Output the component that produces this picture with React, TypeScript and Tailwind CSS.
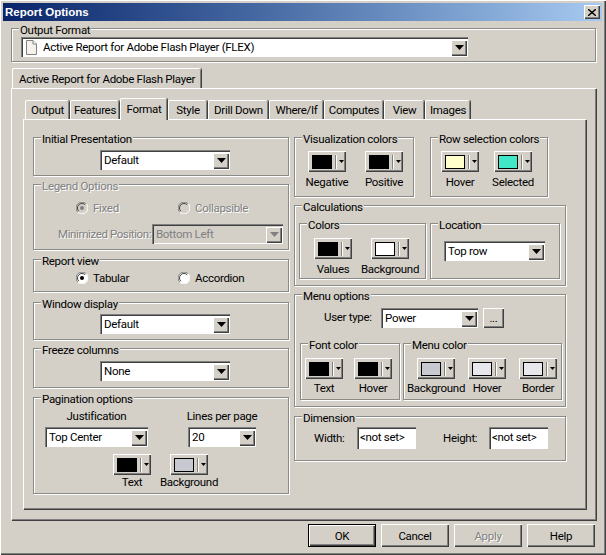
import type { ReactNode } from "react";
import clsx from "clsx";

const raised = "shadow-[inset_1px_1px_0_#fff,inset_-1px_-1px_0_#404040,inset_-2px_-2px_0_#808080]";
const sunken = "shadow-[inset_1px_1px_0_#808080,inset_2px_2px_0_#404040,inset_-1px_-1px_0_#fff]";

function Group({ title, className, disabled, children }: { title: string; className?: string; disabled?: boolean; children?: ReactNode }) {
  return (
    <div className={clsx("relative border border-[#8a8a86] shadow-[inset_1px_1px_0_#fff,1px_1px_0_#fff]", className)}>
      <span className={clsx("absolute left-[7px] top-[-6px] bg-[#d4d0c8] px-px leading-[14px] whitespace-nowrap", disabled && "text-[#808080] [text-shadow:1px_1px_0_#fff]")}>
        {title}
      </span>
      {children}
    </div>
  );
}

function Combo({ text, className, disabled, icon }: { text: string; className?: string; disabled?: boolean; icon?: boolean }) {
  return (
    <div className={clsx("flex h-[20px] items-center p-[2px] pb-[1px] pr-[1px]", sunken, disabled ? "bg-[#d4d0c8] text-[#808080]" : "bg-white", className)}>
      {icon && (
        <svg width="11" height="15" viewBox="0 0 11 15" className="ml-[3px] mr-[6px]">
          <path d="M.5.5h6.5l3.500 3.500v10.500h-10z" fill="#f4f2ea" stroke="#808080" />
          <path d="M7 .5v3.500h3.500" fill="#fff" stroke="#808080" />
        </svg>
      )}
      <span className={clsx("flex-1 whitespace-nowrap pb-[2px]", !icon && "pl-[2px]")}>{text}</span>
      <div className={clsx("flex h-[16px] w-[16px] items-center justify-center bg-[#d4d0c8]", raised)}>
        <svg width="9" height="5" viewBox="0 0 9 5">
          <path d="M0 0h9L4.500 5z" fill={disabled ? "#808080" : "#000"} />
        </svg>
      </div>
    </div>
  );
}

function ColorButton({ color, className }: { color: string; className?: string }) {
  return (
    <div className={clsx("flex h-[21px] w-[38px] items-center bg-[#d4d0c8] pl-[4px]", raised, className)}>
      <div className="h-[14px] w-[20px] border border-black" style={{ backgroundColor: color }} />
      <div className="ml-[3px] h-[14px] w-[2px] border-l border-[#808080] bg-white" />
      <svg width="5" height="3" viewBox="0 0 5 3" className="ml-[2px]">
        <path d="M0 0h5L2.500 3z" fill="#000" />
      </svg>
    </div>
  );
}

// swatch button with its caption centred below
function ColorField({ color, label, className, labelClass }: { color: string; label: string; className?: string; labelClass?: string }) {
  return (
    <div className={clsx("flex flex-col items-center", className)}>
      <ColorButton color={color} />
      <span className={clsx("leading-[14px] whitespace-nowrap", labelClass ?? "mt-[3px]")}>{label}</span>
    </div>
  );
}

function Radio({ checked, disabled }: { checked?: boolean; disabled?: boolean }) {
  return (
    <svg width="12" height="12" viewBox="0 0 12 12" className="shrink-0">
      <circle cx="6" cy="6" r="5.500" fill={disabled ? "#d4d0c8" : "#fff"} />
      <path d="M1.800 10.200A5.500 5.500 0 0 1 10.200 1.800" fill="none" stroke="#808080" />
      <path d="M2.800 9.200A4.300 4.300 0 0 1 9.200 2.800" fill="none" stroke="#404040" />
      <path d="M10.200 1.800A5.500 5.500 0 0 1 1.800 10.200" fill="none" stroke="#fff" />
      {checked && <circle cx="6" cy="6" r="2" fill={disabled ? "#808080" : "#000"} />}
    </svg>
  );
}

function TabBtn({ label, width, active }: { label: string; width: string; active?: boolean }) {
  return (
    <div
      className={clsx(
        "relative flex items-center justify-center rounded-t-[2px] border-l border-t border-white bg-[#d4d0c8] shadow-[inset_-1px_0_0_#808080,1px_0_0_#404040]",
        width,
        active ? "z-10 -mb-px mt-[-2px] h-[22px] pb-[2px]" : "h-[19px]"
      )}
    >
      {label}
    </div>
  );
}

function PushButton({ label, disabled, def }: { label: string; disabled?: boolean; def?: boolean }) {
  return (
    <div
      className={clsx(
        "flex h-[23px] w-[68px] items-center justify-center bg-[#d4d0c8]",
        raised,
        def && "border border-black",
        disabled && "text-[#808080] [text-shadow:1px_1px_0_#fff]"
      )}
    >
      {label}
    </div>
  );
}

const tabs: [string, string][] = [
  ["Style", "w-[39px]"],
  ["Drill Down", "w-[60px]"],
  ["Where/If", "w-[54px]"],
  ["Computes", "w-[59px]"],
  ["View", "w-[40px]"],
  ["Images", "w-[45px]"],
];

export default function App() {
  return (
    <div className="flex h-[555px] w-[606px] flex-col overflow-hidden bg-[#d4d0c8] p-[3px] font-['Roboto','Liberation_Sans',sans-serif] text-[11.5px] leading-[14px] tracking-[-0.3px] text-black shadow-[inset_1px_1px_0_#fff,inset_-1px_-1px_0_#404040,inset_-2px_-2px_0_#808080]">
      {/* title bar */}
      <div className="flex h-[18px] w-[599px] shrink-0 items-center justify-between bg-gradient-to-r from-[#0a246a] to-[#a6caf0] pl-[2px] pr-[2px]">
        <span className="font-['Liberation_Sans',sans-serif] text-[11.500px] font-bold tracking-normal text-white">Report Options</span>
        <div className={clsx("flex h-[14px] w-[16px] items-center justify-center bg-[#d4d0c8]", raised)}>
          <svg width="8" height="7" viewBox="0 0 8 7">
            <path d="M0 0l8 7M8 0L0 7" stroke="#000" strokeWidth="1.400" />
          </svg>
        </div>
      </div>

      <Group title="Output Format" className="ml-[8px] mt-[7px] h-[34px] w-[585px] shrink-0">
        <Combo text="Active Report for Adobe Flash Player (FLEX)" icon className="ml-[9px] mt-[8px] w-[447px]" />
      </Group>

      {/* outer tab */}
      <div className="ml-[8px] mt-[6px] h-[20px] shrink-0">
        <div className="ml-px flex h-[20px] w-[189px] items-center whitespace-nowrap rounded-t-[2px] border-l border-t border-white pl-[6px] shadow-[inset_-1px_0_0_#808080,1px_0_0_#404040]">
          Active Report for Adobe Flash Player
        </div>
      </div>
      <div className="ml-[8px] h-[432px] w-[585px] shrink-0 border-l border-t border-white pl-[11px] pt-[11px] shadow-[inset_-1px_-1px_0_#808080,1px_1px_0_#404040]">
        {/* inner tabs */}
        <div className="ml-[1px] flex h-[19px] items-end gap-[1px] pl-[1px]">
          <TabBtn label="Output" width="w-[44px]" />
          <TabBtn label="Features" width="w-[49px]" />
          <TabBtn label="Format" width="w-[47px]" active />
          {tabs.map(([label, width]) => (
            <TabBtn key={label} label={label} width={width} />
          ))}
        </div>

        <div className="flex h-[390px] w-[563px] gap-[5px] border-l border-t border-white pl-[9px] pt-[17px] shadow-[inset_-1px_-1px_0_#808080,1px_1px_0_#404040]">
          {/* left column */}
          <div className="flex w-[256px] shrink-0 flex-col">
            <Group title="Initial Presentation" className="h-[39px]">
              <Combo text="Default" className="ml-[66px] mt-[12px] w-[130px]" />
            </Group>

            <Group title="Legend Options" disabled className="mt-[8px] h-[66px]">
              <div className="mt-[16px] flex items-center text-[#808080] [text-shadow:1px_1px_0_#fff]">
                <div className="ml-[42px] flex w-[102px] items-center gap-[5px]">
                  <Radio checked disabled />
                  <span>Fixed</span>
                </div>
                <div className="flex items-center gap-[5px]">
                  <Radio disabled />
                  <span>Collapsible</span>
                </div>
              </div>
              <div className="mt-[9px] flex items-center text-[#808080]">
                <span className="ml-[24px] w-[94px] whitespace-nowrap tracking-[-0.4px] [text-shadow:1px_1px_0_#fff]">Minimized Position:</span>
                <Combo text="Bottom Left" disabled className="w-[131px]" />
              </div>
            </Group>

            <Group title="Report view" className="mt-[9px] h-[33px]">
              <div className="mt-[11px] flex items-center">
                <div className="ml-[42px] flex w-[102px] items-center gap-[5px]">
                  <Radio checked />
                  <span>Tabular</span>
                </div>
                <div className="flex items-center gap-[5px]">
                  <Radio />
                  <span>Accordion</span>
                </div>
              </div>
            </Group>

            <Group title="Window display" className="mt-[10px] h-[38px]">
              <Combo text="Default" className="ml-[66px] mt-[11px] w-[130px]" />
            </Group>

            <Group title="Freeze columns" className="mt-[8px] h-[40px]">
              <Combo text="None" className="ml-[66px] mt-[12px] w-[130px]" />
            </Group>

            <Group title="Pagination options" className="mt-[9px] h-[97px]">
              <div className="mt-[11px] flex">
                <div className="ml-[11px] flex w-[103px] flex-col items-center">
                  <span>Justification</span>
                  <Combo text="Top Center" className="mt-[4px] w-[103px]" />
                </div>
                <div className="ml-[40px] flex w-[68px] flex-col items-center">
                  <span className="whitespace-nowrap">Lines per page</span>
                  <Combo text="20" className="mt-[4px] w-[68px]" />
                </div>
              </div>
              <div className="mt-[7px] flex">
                <ColorField color="#000000" label="Text" labelClass="mt-0" className="ml-[79px] w-[38px]" />
                <ColorField color="#c8c8d0" label="Background" labelClass="mt-0" className="ml-[19px] w-[38px]" />
              </div>
            </Group>
          </div>

          {/* right column */}
          <div className="flex w-[272px] shrink-0 flex-col">
            <div className="flex h-[60px]">
              <Group title="Visualization colors" className="w-[120px]">
                <div className="mt-[13px] flex">
                  <ColorField color="#000000" label="Negative" className="ml-[13px] w-[38px]" />
                  <ColorField color="#000000" label="Positive" className="ml-[19px] w-[38px]" />
                </div>
              </Group>
              <Group title="Row selection colors" className="ml-[16px] w-[118px]">
                <div className="mt-[13px] flex">
                  <ColorField color="#ffffcc" label="Hover" className="ml-[10px] w-[38px]" />
                  <ColorField color="#40e8c8" label="Selected" className="ml-[15px] w-[38px]" />
                </div>
              </Group>
            </div>

            <Group title="Calculations" className="mt-[8px] h-[81px]">
              <div className="ml-[4px] mt-[17px] flex h-[56px] gap-[4px]">
                <Group title="Colors" className="w-[127px]">
                  <div className="mt-[14px] flex">
                    <ColorField color="#000000" label="Values" className="ml-[14px] w-[38px]" />
                    <ColorField color="#ffffff" label="Background" className="ml-[19px] w-[38px]" />
                  </div>
                </Group>
                <Group title="Location" className="w-[130px]">
                  <Combo text="Top row" className="ml-[13px] mt-[17px] w-[101px]" />
                </Group>
              </div>
            </Group>

            <Group title="Menu options" className="mt-[8px] h-[113px]">
              <div className="mt-[13px] flex items-center">
                <span className="ml-[29px] w-[57px] pb-[2px]">User type:</span>
                <Combo text="Power" className="w-[97px]" />
                <div className={clsx("ml-[5px] flex h-[20px] w-[21px] items-center justify-center bg-[#d4d0c8]", raised)}>...</div>
              </div>
              <div className="ml-[5px] mt-[15px] flex h-[57px] gap-[3px]">
                <Group title="Font color" className="w-[100px]">
                  <div className="mt-[14px] flex">
                    <ColorField color="#000000" label="Text" labelClass="mt-[2px]" className="ml-[4px] w-[38px]" />
                    <ColorField color="#000000" label="Hover" labelClass="mt-[2px]" className="ml-[11px] w-[38px]" />
                  </div>
                </Group>
                <Group title="Menu color" className="w-[159px]">
                  <div className="mt-[14px] flex">
                    <ColorField color="#c8c8d0" label="Background" labelClass="mt-[2px]" className="ml-[13px] w-[38px]" />
                    <ColorField color="#e8e8ec" label="Hover" labelClass="mt-[2px]" className="ml-[13px] w-[38px]" />
                    <ColorField color="#e8e8ec" label="Border" labelClass="mt-[2px]" className="ml-[13px] w-[38px]" />
                  </div>
                </Group>
              </div>
            </Group>

            <Group title="Dimension" className="mt-[9px] h-[45px]">
              <div className="mt-[10px] flex items-center">
                <span className="ml-[19px] w-[43px]">Width:</span>
                <div className={clsx("flex h-[22px] w-[59px] items-center bg-white pb-[2px] pl-[3px]", sunken)}>&lt;not set&gt;</div>
                <span className="ml-[27px] w-[46px]">Height:</span>
                <div className={clsx("flex h-[22px] w-[59px] items-center bg-white pb-[2px] pl-[3px]", sunken)}>&lt;not set&gt;</div>
              </div>
            </Group>
          </div>
        </div>
      </div>

      {/* dialog buttons */}
      <div className="ml-[305px] mt-[4px] flex gap-[5px]">
        <PushButton label="OK" def />
        <PushButton label="Cancel" />
        <PushButton label="Apply" disabled />
        <PushButton label="Help" />
      </div>
    </div>
  );
}
